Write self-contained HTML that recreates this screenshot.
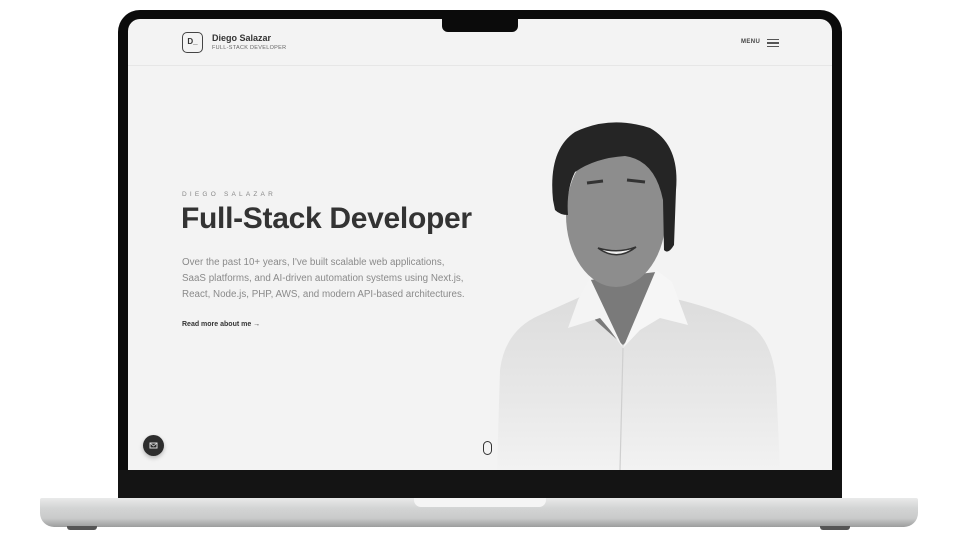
<!DOCTYPE html>
<html><head><meta charset="utf-8"><style>
*{margin:0;padding:0;box-sizing:border-box}
body{width:960px;height:540px;background:#fff;position:relative;overflow:hidden;font-family:"Liberation Sans",sans-serif}
.bezel{position:absolute;left:118px;top:10px;width:724px;height:490px;background:#0b0b0b;border-radius:22px 22px 0 0}
.chin{position:absolute;left:118px;top:470px;width:724px;height:28px;background:#141414}
.screen{position:absolute;left:128px;top:19px;width:704px;height:451px;background:#f3f3f3;border-radius:12px 12px 0 0;overflow:hidden}
.notch{position:absolute;left:442px;top:17px;width:76px;height:15px;background:#0b0b0b;border-radius:0 0 6px 6px}
.base{position:absolute;left:40px;top:498px;width:878px;height:29px;border-radius:2px 2px 14px 14px;background:linear-gradient(#e9eaea 0,#d3d4d4 35%,#c9caca 70%,#9c9d9d 100%)}
.groove{position:absolute;left:414px;top:498px;width:132px;height:9px;background:#f5f5f5;border-radius:0 0 7px 7px}
.foot{position:absolute;top:526px;width:30px;height:4px;background:#555;border-radius:0 0 3px 3px}
.hdr{position:absolute;left:0;top:0;width:704px;height:47px;border-bottom:1px solid #e6e6e6}
.logo{position:absolute;left:54px;top:13px;width:21px;height:21px;border:1.5px solid #444;border-radius:5px;font-size:8px;font-weight:bold;color:#333;text-align:center;line-height:18px}
.name{position:absolute;left:84px;top:14px;font-size:9px;font-weight:bold;color:#333}
.sub{position:absolute;left:84px;top:26px;font-size:5.5px;color:#666;letter-spacing:.3px}
.menu{position:absolute;left:613px;top:20px;font-size:6px;font-weight:bold;color:#444;letter-spacing:.4px}
.ham{position:absolute;left:639px;top:20px;width:12px}
.ham i{display:block;height:1.2px;background:#555;margin-bottom:2.3px}
.eye{position:absolute;left:54px;top:172px;font-size:6.5px;letter-spacing:3.2px;color:#888}
h1{position:absolute;left:53px;top:183px;font-size:30px;font-weight:bold;color:#333;letter-spacing:-.3px;white-space:nowrap}
.p{position:absolute;left:54px;top:236px;font-size:9.8px;line-height:16.2px;color:#8a8a8a;white-space:nowrap}
.rm{position:absolute;left:54px;top:302px;font-size:7px;font-weight:bold;color:#333}
.mail{position:absolute;left:15px;top:416px;width:21px;height:21px;border-radius:50%;background:#2d2d2d;box-shadow:0 2px 4px rgba(0,0,0,.25)}
.mouse{position:absolute;left:355px;top:422px;width:9px;height:14px;border:1.2px solid #333;border-radius:5px}
</style></head><body>
<div class="bezel"></div>
<div class="screen">
 <div class="hdr"></div>
 <div class="logo">D_</div>
 <div class="name">Diego Salazar</div>
 <div class="sub">FULL-STACK DEVELOPER</div>
 <div class="menu">MENU</div>
 <div class="ham"><i></i><i></i><i></i></div>
 <div class="eye">DIEGO SALAZAR</div>
 <h1>Full-Stack Developer</h1>
 <div class="p">Over the past 10+ years, I've built scalable web applications,<br>SaaS platforms, and AI-driven automation systems using Next.js,<br>React, Node.js, PHP, AWS, and modern API-based architectures.</div>
 <div class="rm">Read more about me →</div>
 <div class="mail"><svg width="21" height="21" viewBox="0 0 21 21"><rect x="7" y="8" width="7" height="5" fill="none" stroke="#ddd" stroke-width="1"/><path d="M7 8l3.5 3 3.5-3" fill="none" stroke="#ddd" stroke-width=".8"/></svg></div>
 <div class="mouse"></div>
 <svg style="position:absolute;left:0;top:0" width="704" height="451" viewBox="128 19 704 451">
  <defs>
   <linearGradient id="sh" x1="0" y1="0" x2="0" y2="1"><stop offset="0" stop-color="#dcdcdc"/><stop offset=".6" stop-color="#e8e8e8"/><stop offset="1" stop-color="#f2f2f2"/></linearGradient>
  </defs>
  <path d="M497 470 L500 370 Q505 330 540 315 L580 297 L600 292 L640 292 L680 300 Q720 310 750 325 Q772 340 776 380 L780 470Z" fill="url(#sh)"/>
  <path d="M590 280 L595 320 L623 345 L650 318 L656 272 Z" fill="#7a7a7a"/>
  <path d="M590 278 L578 300 L568 328 L600 318 L610 330 L623 348Z" fill="#f4f4f4"/>
  <path d="M656 270 L672 282 L688 325 L660 318 L640 330 L623 348Z" fill="#f6f6f6"/>
  <path d="M623 348 L620 470" stroke="#cfcfcf" stroke-width="1.2"/>
  <ellipse cx="616" cy="215" rx="50" ry="72" fill="#8d8d8d"/>
  <path d="M553 200 Q548 150 575 132 Q610 115 650 128 Q680 145 676 190 L674 245 Q668 255 664 250 L663 200 Q655 160 625 156 Q595 158 575 172 Q566 190 568 215 Q560 215 555 210Z" fill="#252525"/>
  <path d="M587 183 L603 181 M627 180 L645 182" stroke="#333" stroke-width="3"/>
  <path d="M598 248 Q617 262 636 247 Q618 254 598 248Z" fill="#f0f0f0" stroke="#333" stroke-width="1.5"/>
 </svg>
</div>
<div class="notch"></div>
<div class="chin"></div>
<div class="base"></div>
<div class="groove"></div>
<div class="foot" style="left:67px"></div>
<div class="foot" style="left:820px"></div>
</body></html>
